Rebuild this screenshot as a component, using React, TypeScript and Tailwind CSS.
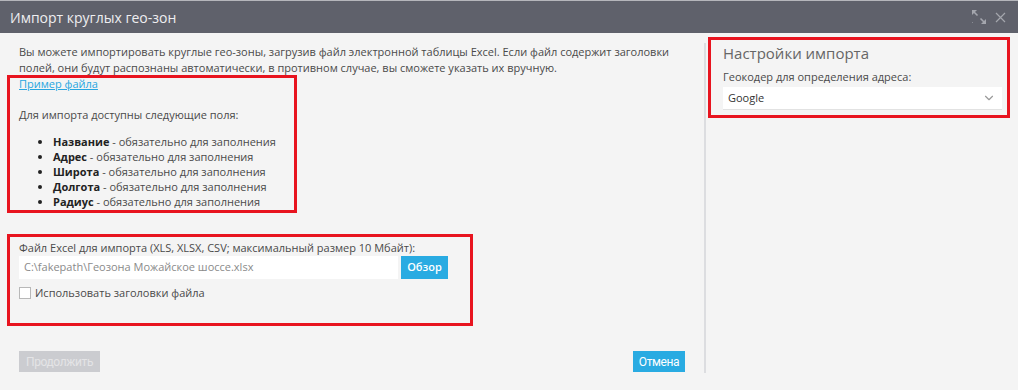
import { ChevronDown } from 'lucide-react';

const FIELDS = ['Название', 'Адрес', 'Широта', 'Долгота', 'Радиус'];

function ExpandIcon() {
  return (
    <svg width="16" height="16" viewBox="0 0 16 16" className="text-[#a4a6ad]">
      <path d="M1 1 L6 1 L1 6 Z" fill="currentColor" />
      <path d="M3 3 L6.5 6.5" stroke="currentColor" strokeWidth="1.6" />
      <path d="M15 15 L10 15 L15 10 Z" fill="currentColor" />
      <path d="M13 13 L9.5 9.5" stroke="currentColor" strokeWidth="1.6" />
      <rect x="1" y="13" width="1" height="1" fill="currentColor" opacity="0.6" />
    </svg>
  );
}

function CloseIcon() {
  return (
    <svg width="11" height="11" viewBox="0 0 11 11" className="text-[#a4a6ad]">
      <path d="M1 1 L10 10 M10 1 L1 10" stroke="currentColor" strokeWidth="1.2" />
    </svg>
  );
}

export default function App() {
  return (
    <div className="relative flex h-[390px] w-[1018px] flex-col overflow-hidden bg-[#f4f4f4] font-['Open_Sans',sans-serif] text-[11px] text-[#4a4a4a]">
      <div className="flex h-[33px] shrink-0 items-center justify-between border-t border-[#b5b6bb] bg-[#5f616b] pl-[10px] pr-[12px]">
        <span className="text-[14px] text-[#eeeef0]">Импорт круглых гео-зон</span>
        <div className="flex items-center gap-[8px]">
          <ExpandIcon />
          <CloseIcon />
        </div>
      </div>

      <div className="flex min-h-0 flex-1">
        <div className="flex w-[704px] shrink-0 flex-col pb-[18px] pl-[19px] pr-[19px] pt-[11px]">
          <p className="leading-[16px]">
            Вы можете импортировать круглые гео-зоны, загрузив файл электронной таблицы Excel. Если файл содержит заголовки
            полей, они будут распознаны автоматически, в противном случае, вы сможете указать их вручную.
          </p>
          <a className="self-start leading-[16px] text-[#29a6e0] underline">Пример файла</a>

          <p className="mt-[15px] leading-[16px]">Для импорта доступны следующие поля:</p>
          <ul className="mt-[11px] list-disc pl-[34px] leading-[15px] marker:text-[#222]">
            {FIELDS.map((f) => (
              <li key={f}>
                <b className="font-bold text-[#222]">{f}</b> - обязательно для заполнения
              </li>
            ))}
          </ul>

          <label className="mt-[31px] leading-[16px]">Файл Excel для импорта (XLS, XLSX, CSV; максимальный размер 10 Мбайт):</label>
          <div className="flex items-center gap-[3px]">
            <div className="flex h-[23px] w-[379px] items-center bg-white px-[5px] text-[#8a8a8a]">
              C:\fakepath\Геозона Можайское шоссе.xlsx
            </div>
            <button className="h-[23px] w-[47px] bg-[#29abe2] text-[11px] font-semibold text-white">Обзор</button>
          </div>
          <label className="mt-[6px] flex items-center gap-[4px] leading-[16px]">
            <span className="h-[12px] w-[12px] border border-[#b8b8b8] bg-white" />
            Использовать заголовки файла
          </label>

          <div className="mt-auto flex items-end justify-between">
            <button className="h-[21px] w-[81px] bg-[#cbccd0] font-['Roboto',sans-serif] text-[12px] tracking-[-0.4px] text-[#e4e4e6]">
              Продолжить
            </button>
            <button className="h-[21px] w-[52px] bg-[#29abe2] font-['Roboto',sans-serif] text-[12px] tracking-[-0.4px] text-white">
              Отмена
            </button>
          </div>
        </div>

        <div className="mb-[17px] mt-[10px] w-[2px] shrink-0 bg-[#dcdde0]" />

        <div className="flex flex-1 flex-col pl-[17px] pr-[16px] pt-[10px]">
          <h2 className="text-[15px] leading-[20px] text-[#666]">Настройки импорта</h2>
          <label className="mt-[6px] leading-[16px]">Геокодер для определения адреса:</label>
          <div className="mt-[2px] flex h-[23px] items-center justify-between border-b border-[#e2e2e2] bg-white pl-[5px] pr-[6px] text-[#333]">
            Google
            <ChevronDown size={14} className="text-[#9a9a9a]" />
          </div>
        </div>
      </div>

      <div className="pointer-events-none absolute left-[7px] top-[75px] h-[138px] w-[290px] border-[3px] border-[#e8141f]" />
      <div className="pointer-events-none absolute left-[7px] top-[234px] h-[92px] w-[466px] border-[3px] border-[#e8141f]" />
      <div className="pointer-events-none absolute left-[708px] top-[37px] h-[81px] w-[302px] border-[3px] border-[#e8141f]" />
    </div>
  );
}
